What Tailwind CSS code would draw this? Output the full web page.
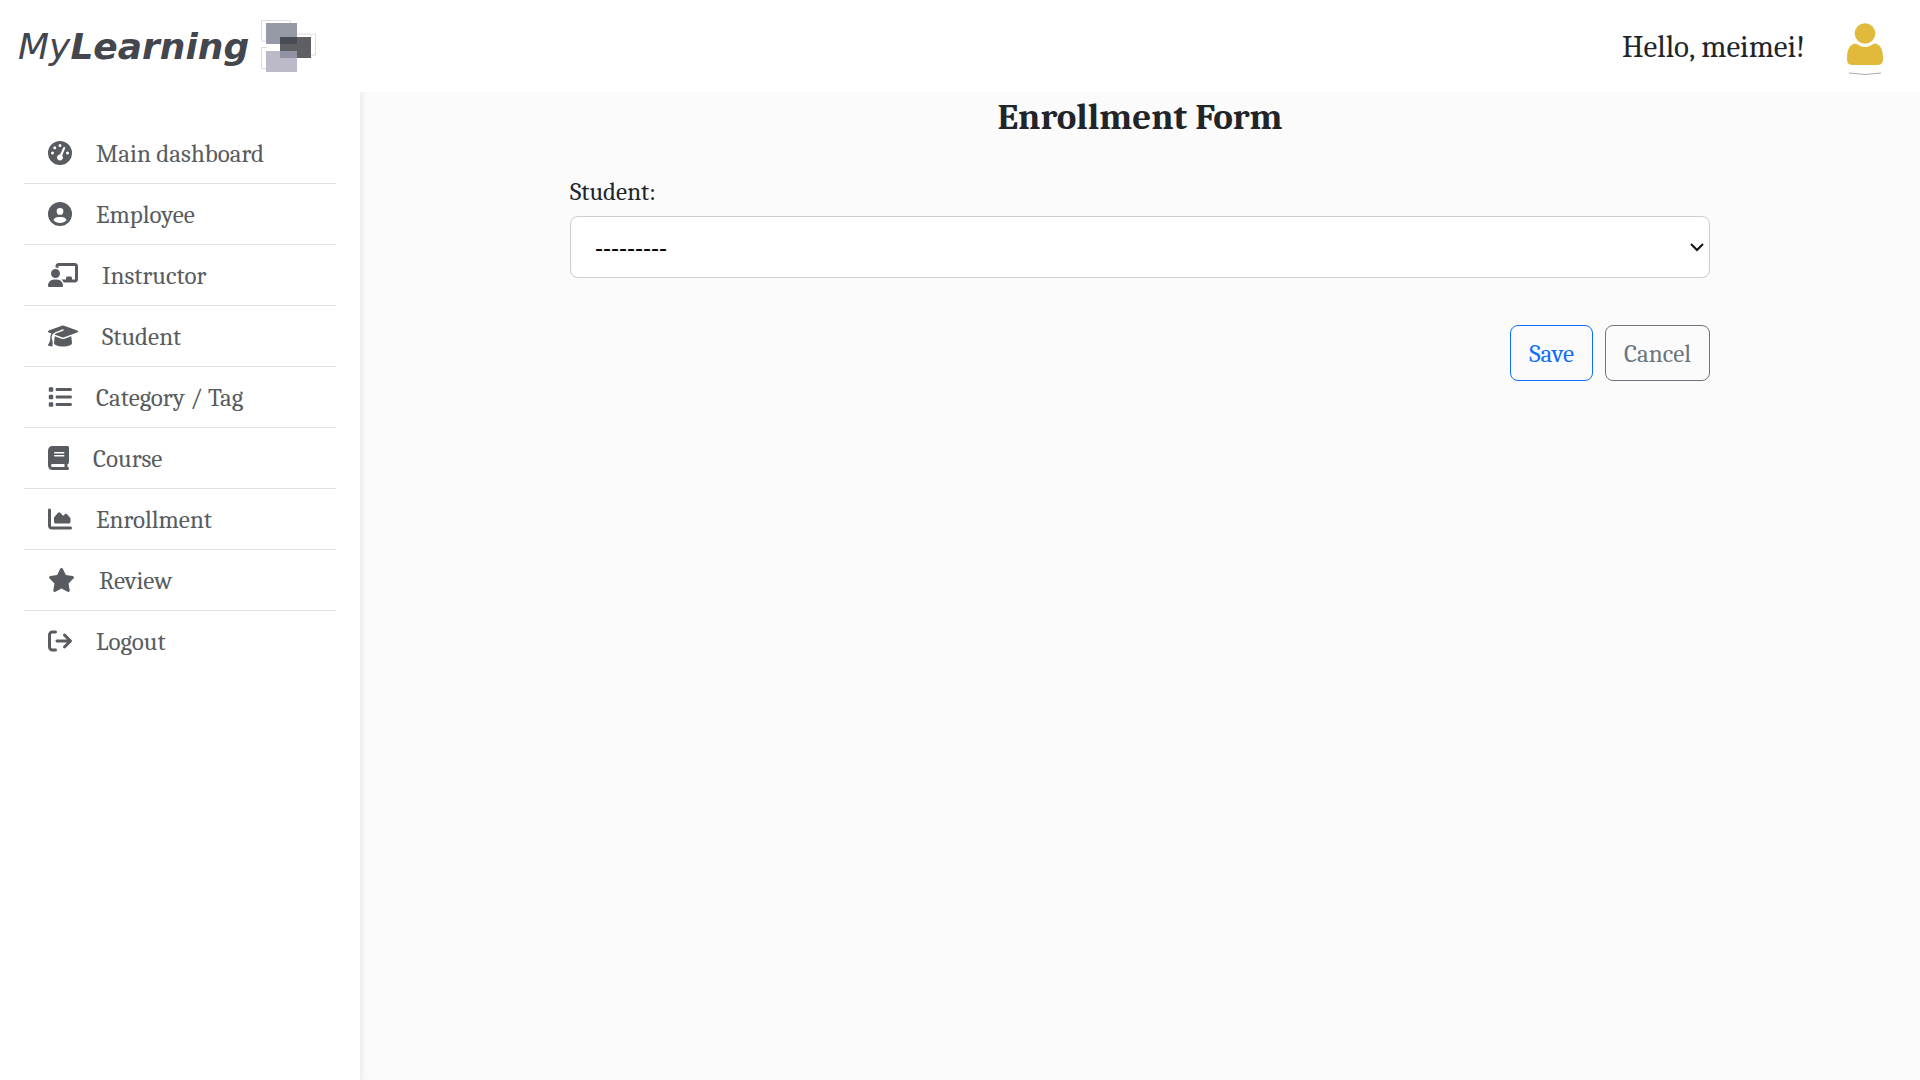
<!DOCTYPE html>
<html lang="en">
<head>
<meta charset="utf-8">
<meta name="viewport" content="width=device-width, initial-scale=1">
<title>Enrollment Form - MyLearning</title>
<script src="https://cdn.jsdelivr.net/npm/@tailwindcss/browser@4"></script>
</head>
<body class="flex min-h-screen flex-col bg-white font-[Cambria,Caladea,'Liberation_Serif',serif] text-[25px] leading-9 text-[#212529]">
<header class="flex h-[92px] shrink-0 items-center justify-between pt-0.5 pr-[35px] pl-[18px]">
  <a href="#" class="flex items-center gap-3" aria-label="MyLearning home">
    <span class="font-['DejaVu_Sans',sans-serif] text-[36px] leading-10 italic text-[#43464d]">My<b>Learning</b></span>
    <svg class="h-[54px] w-[56px]" viewBox="0 0 56 54" fill="none" aria-hidden="true">
      <path d="M.5 21V.5H29V3M.5 48.500V27.500H6M.5 48.500H6M.5 21H6M35 14H54.500V35H50" stroke="#dcdce0"/>
      <path d="M5 3H36V24H5z" fill="#969aa6"/>
      <path d="M5 31H36V52H5z" fill="#bcbac9"/>
      <path d="M19 17H50V38H19z" fill="#5e6064"/>
      <path d="M19 17H36V24H19z" fill="#484b53"/>
      <path d="M19 31H36V38H19z" fill="#9192a3"/>
    </svg>
  </a>
  <div class="flex items-center gap-10">
    <span class="text-[31px] leading-10">Hello, meimei!</span>
    <svg class="h-[56px] w-[40px]" viewBox="0 0 40 56" aria-hidden="true">
      <g fill="#e1ba3c"><circle cx="20" cy="14.500" r="10.300"/>
      <path d="M9 24.500Q12 24.500 14.500 26.500Q20 29.500 25.500 26.500Q28 24.500 31 24.500Q38 27.500 38 38.500V40.500Q38 46 32 46H8Q2 46 2 40.500V38.500Q2 27.500 9 24.500z"/></g>
      <path d="M4 54Q20 57 36 54" stroke="#aaa" fill="none"/>
    </svg>
  </div>
</header>
<div class="flex flex-1">
  <nav class="w-[360px] shrink-0 px-6 pt-[31px]" aria-label="Main">
    <ul class="divide-y divide-[#dee2e6] text-[#585c60] [&_a]:pt-0.5 [&_svg]:mb-0.5">
      <li><a href="#" class="flex h-[60px] items-center gap-6 pl-6"><svg class="h-6 w-6" viewBox="0 0 512 512" fill="currentColor" aria-hidden="true"><path d="M0 256a256 256 0 1 1 512 0A256 256 0 1 1 0 256zM288 96a32 32 0 1 0-64 0 32 32 0 1 0 64 0zM256 416c35.300 0 64-28.700 64-64c0-17.400-6.900-33.100-18.100-44.600L366 161.700c5.300-12.100-.2-26.300-12.300-31.600s-26.300 .2-31.600 12.300L257.900 288c-.6 0-1.300 0-1.900 0c-35.300 0-64 28.700-64 64s28.700 64 64 64zM176 144a32 32 0 1 0-64 0 32 32 0 1 0 64 0zM96 288a32 32 0 1 0 0-64 32 32 0 1 0 0 64zm352-32a32 32 0 1 0-64 0 32 32 0 1 0 64 0z"/></svg>Main dashboard</a></li>
      <li><a href="#" class="flex h-[60px] items-center gap-6 pl-6"><svg class="h-6 w-6" viewBox="0 0 512 512" fill="currentColor" aria-hidden="true"><path d="M399 384.200C376.900 345.800 335.400 320 288 320H224c-47.400 0-88.900 25.800-111 64.200c35.200 39.200 86.200 63.800 143 63.800s107.800-24.700 143-63.800zM0 256a256 256 0 1 1 512 0A256 256 0 1 1 0 256zm256 16a72 72 0 1 0 0-144 72 72 0 1 0 0 144z"/></svg>Employee</a></li>
      <li><a href="#" class="flex h-[60px] items-center gap-6 pl-6"><svg class="h-6 w-[30px]" viewBox="0 0 640 512" fill="currentColor" aria-hidden="true"><path d="M160 64c0-35.300 28.700-64 64-64H576c35.300 0 64 28.700 64 64V352c0 35.300-28.700 64-64 64H336.800c-11.800-25.500-29.900-47.500-52.400-64H384V320c0-17.700 14.300-32 32-32h64c17.700 0 32 14.300 32 32v32h64V64L224 64v49.100C205.200 102.200 183.300 96 160 96V64zm0 64a96 96 0 1 1 0 192 96 96 0 1 1 0-192zM133.300 352h53.300C260.300 352 320 411.700 320 485.300c0 14.700-11.900 26.700-26.700 26.700H26.700C11.900 512 0 500.100 0 485.300C0 411.700 59.700 352 133.300 352z"/></svg>Instructor</a></li>
      <li><a href="#" class="flex h-[60px] items-center gap-6 pl-6"><svg class="h-6 w-[30px]" viewBox="0 0 640 512" fill="currentColor" aria-hidden="true"><path d="M320 32c-8.100 0-16.100 1.400-23.700 4.100L15.800 137.400C6.300 140.900 0 149.900 0 160s6.300 19.100 15.800 22.600l57.900 20.900C57.300 229.300 48 259.800 48 291.900v28.100c0 28.400-10.800 57.700-22.300 80.800c-6.500 13-13.900 25.800-22.500 37.600C0 442.700-.9 448.300 .9 453.400s6 8.900 11.200 10.200l64 16c4.200 1.100 8.700 .3 12.400-2s6.300-6.100 7.100-10.400c8.600-42.800 4.300-81.200-2.100-108.700C90.300 344.300 86 329.800 80 316.500V291.900c0-30.200 10.200-58.700 27.900-81.500c12.900-15.500 29.600-28 49.200-35.700l157-61.700c8.200-3.200 17.500 .8 20.700 9s-.8 17.500-9 20.700l-157 61.700c-12.400 4.900-23.300 12.400-32.200 21.600l159.600 57.600c7.600 2.700 15.600 4.100 23.700 4.100s16.100-1.400 23.700-4.100L624.200 182.600c9.500-3.400 15.800-12.500 15.800-22.600s-6.300-19.100-15.800-22.600L343.700 36.100C336.100 33.400 328.100 32 320 32zM128 408c0 35.300 86 72 192 72s192-36.700 192-72L496.700 262.600 354.500 314c-11.100 4-22.800 6-34.500 6s-23.500-2-34.500-6L143.300 262.600 128 408z"/></svg>Student</a></li>
      <li><a href="#" class="flex h-[60px] items-center gap-6 pl-6"><svg class="h-6 w-6" viewBox="0 0 512 512" fill="currentColor" aria-hidden="true"><path d="M40 48C26.700 48 16 58.700 16 72v48c0 13.300 10.700 24 24 24H88c13.300 0 24-10.700 24-24V72c0-13.300-10.700-24-24-24H40zM192 64c-17.700 0-32 14.300-32 32s14.300 32 32 32H480c17.700 0 32-14.300 32-32s-14.300-32-32-32H192zm0 160c-17.700 0-32 14.300-32 32s14.300 32 32 32H480c17.700 0 32-14.300 32-32s-14.300-32-32-32H192zm0 160c-17.700 0-32 14.300-32 32s14.300 32 32 32H480c17.700 0 32-14.300 32-32s-14.300-32-32-32H192zM16 232v48c0 13.300 10.700 24 24 24H88c13.300 0 24-10.700 24-24V232c0-13.300-10.700-24-24-24H40c-13.300 0-24 10.700-24 24zM40 368c-13.300 0-24 10.700-24 24v48c0 13.300 10.700 24 24 24H88c13.300 0 24-10.700 24-24V392c0-13.300-10.700-24-24-24H40z"/></svg>Category / Tag</a></li>
      <li><a href="#" class="flex h-[60px] items-center gap-6 pl-6"><svg class="h-6 w-[21px]" viewBox="0 0 448 512" fill="currentColor" aria-hidden="true"><path d="M96 0C43 0 0 43 0 96V416c0 53 43 96 96 96H384h32c17.700 0 32-14.300 32-32s-14.300-32-32-32V384c17.700 0 32-14.300 32-32V32c0-17.700-14.300-32-32-32H384 96zm0 384H352v64H96c-17.700 0-32-14.300-32-32s14.300-32 32-32zm32-240c0-8.800 7.200-16 16-16H336c8.800 0 16 7.200 16 16s-7.200 16-16 16H144c-8.800 0-16-7.200-16-16zm16 48H336c8.800 0 16 7.200 16 16s-7.200 16-16 16H144c-8.800 0-16-7.200-16-16s7.200-16 16-16z"/></svg>Course</a></li>
      <li><a href="#" class="flex h-[60px] items-center gap-6 pl-6"><svg class="h-6 w-6" viewBox="0 0 512 512" fill="currentColor" aria-hidden="true"><path d="M64 64c0-17.700-14.300-32-32-32S0 46.300 0 64V400c0 44.200 35.800 80 80 80H480c17.700 0 32-14.300 32-32s-14.300-32-32-32H80c-8.800 0-16-7.200-16-16V64zm96 288H448c17.700 0 32-14.300 32-32V251.800c0-7.600-2.700-15-7.700-20.800l-65.800-76.800c-12.100-14.200-33.700-15-46.900-1.800l-21 21c-10 10-26.400 9.200-35.400-1.600l-39.200-47c-12.600-15.100-35.700-15.400-48.700-.6L135.900 215c-5.100 5.800-7.900 13.300-7.900 21.100v84c0 17.700 14.300 32 32 32z"/></svg>Enrollment</a></li>
      <li><a href="#" class="flex h-[60px] items-center gap-6 pl-6"><svg class="h-6 w-[27px]" viewBox="0 0 576 512" fill="currentColor" aria-hidden="true"><path d="M316.900 18C311.600 7 300.400 0 288.100 0s-23.400 7-28.800 18L195 150.300 51.400 171.500c-12 1.800-22 10.200-25.700 21.700s-.7 24.200 7.900 32.700L137.800 329 113.200 474.700c-2 12 3 24.200 12.900 31.300s23 8 33.800 2.300l128.300-68.500 128.300 68.500c10.800 5.700 23.900 4.900 33.800-2.300s14.900-19.300 12.900-31.300L438.500 329 542.700 225.900c8.600-8.500 11.700-21.200 7.900-32.700s-13.700-19.900-25.700-21.700L381.200 150.300 316.900 18z"/></svg>Review</a></li>
      <li><a href="#" class="flex h-[60px] items-center gap-6 pl-6"><svg class="h-6 w-6" viewBox="0 0 512 512" fill="currentColor" aria-hidden="true"><path d="M502.600 278.600c12.500-12.500 12.500-32.800 0-45.300l-128-128c-12.500-12.500-32.800-12.500-45.300 0s-12.500 32.800 0 45.300L402.700 224 192 224c-17.700 0-32 14.300-32 32s14.300 32 32 32l210.700 0-73.400 73.400c-12.500 12.500-12.500 32.800 0 45.300s32.800 12.500 45.300 0l128-128zM160 96c17.700 0 32-14.300 32-32s-14.300-32-32-32L96 32C43 32 0 75 0 128L0 384c0 53 43 96 96 96l64 0c17.700 0 32-14.300 32-32s-14.300-32-32-32l-64 0c-17.700 0-32-14.300-32-32l0-256c0-17.700 14.300-32 32-32l64 0z"/></svg>Logout</a></li>
    </ul>
  </nav>
  <main class="flex-1 bg-[#fbfbfb] px-6 shadow-[inset_6px_0_6px_-4px_rgba(0,0,0,0.07)]">
    <form class="mx-auto w-full max-w-[1140px]">
      <h1 class="pt-[3px] text-center text-[37px] leading-[44px] font-bold">Enrollment Form</h1>
      <label for="student" class="mt-[35px] block">Student:</label>
      <div class="relative mt-[6px]">
        <select id="student" class="block h-[62px] w-full appearance-none rounded-lg border border-[#ccc] bg-white pt-0.5 pl-6 pr-10 font-['Liberation_Sans',sans-serif] text-2xl text-black">
          <option>---------</option>
        </select>
        <svg class="pointer-events-none absolute top-6 right-[6px] h-[14px] w-[14px]" viewBox="0 0 14 14" fill="none" stroke="#111" stroke-width="2" aria-hidden="true"><path d="M1 4L7 10L13 4"/></svg>
      </div>
      <div class="mt-[47px] flex justify-end gap-3">
        <button type="submit" class="h-14 rounded-lg border border-[#0d6efd] px-[18px] pt-0.5 text-[#0d6efd]">Save</button>
        <button type="button" class="h-14 rounded-lg border border-[#6c757d] px-[18px] pt-0.5 text-[#6c757d]">Cancel</button>
      </div>
    </form>
  </main>
</div>
</body>
</html>
